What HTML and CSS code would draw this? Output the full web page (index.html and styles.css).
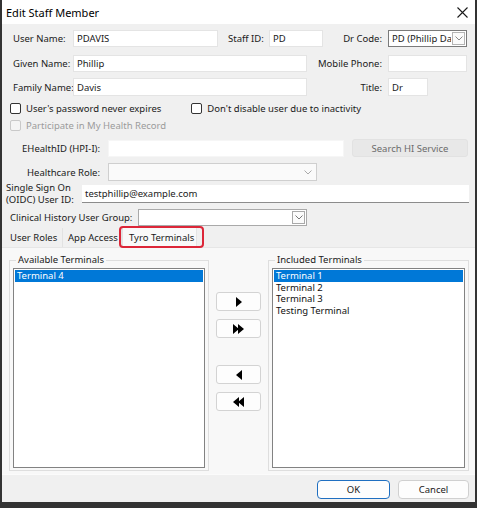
FILE: index.html
```html
<!DOCTYPE html>
<html>
<head>
<meta charset="utf-8">
<link rel="stylesheet" href="styles.css">
</head>
<body>
<div class="window">
  <div class="titlebar">
    <span class="title">Edit Staff Member</span>
    <svg class="close" width="11" height="11" viewBox="0 0 11 11"><path d="M0.5 0.5L10.5 10.5M10.5 0.5L0.5 10.5" stroke="#1a1a1a" stroke-width="1.1"/></svg>
  </div>
  <div class="content">
    <div class="row r1">
      <label class="lbl w60">User Name:</label>
      <div class="input w145">PDAVIS</div>
      <label class="lbl staff">Staff ID:</label>
      <div class="input w54">PD</div>
      <label class="lbl rt w65">Dr Code:</label>
      <div class="select dark w79"><span class="val">PD (Phillip Da</span><span class="drop"><svg width="8" height="5" viewBox="0 0 8 5"><path d="M0.5 0.5L4 4L7.5 0.5" fill="none" stroke="#888" stroke-width="1"/></svg></span></div>
    </div>
    <div class="row r2">
      <label class="lbl w60">Given Name:</label>
      <div class="input w234">Phillip</div>
      <label class="lbl rt w81">Mobile Phone:</label>
      <div class="input w79"></div>
    </div>
    <div class="row r3">
      <label class="lbl w60">Family Name:</label>
      <div class="input w234">Davis</div>
      <label class="lbl rt w81">Title:</label>
      <div class="input w40">Dr</div>
    </div>
    <div class="row r4">
      <span class="check"></span><span class="ctext">User's password never expires</span>
      <span class="check c2"></span><span class="ctext">Don't disable user due to inactivity</span>
    </div>
    <div class="row r5">
      <span class="check disabled"></span><span class="ctext dis">Participate in My Health Record</span>
    </div>
    <div class="row r6">
      <label class="lbl rt w106">EHealthID (HPI-I):</label>
      <div class="input noborder w236"></div>
      <div class="btn-search">Search HI Service</div>
    </div>
    <div class="row r7">
      <label class="lbl rt w106">Healthcare Role:</label>
      <div class="select light w209"><span class="val"></span><span class="chev"><svg width="8" height="5" viewBox="0 0 8 5"><path d="M0.5 0.5L4 4L7.5 0.5" fill="none" stroke="#aaa" stroke-width="1"/></svg></span></div>
    </div>
    <div class="row r8">
      <label class="lbl two w76">Single Sign On<br>(OIDC) User ID:</label>
      <div class="input sso w387">testphillip@example.com</div>
    </div>
    <div class="row r9">
      <label class="lbl w128">Clinical History User Group:</label>
      <div class="select mid w169"><span class="val"></span><span class="drop"><svg width="8" height="5" viewBox="0 0 8 5"><path d="M0.5 0.5L4 4L7.5 0.5" fill="none" stroke="#777" stroke-width="1"/></svg></span></div>
    </div>
    <div class="tabs">
      <div class="tab">User Roles</div>
      <div class="tab">App Access</div>
      <div class="tab active">Tyro Terminals<span class="highlight"></span></div>
    </div>
    <div class="panel">
      <fieldset class="group">
        <legend>Available Terminals</legend>
        <div class="list">
          <div class="item sel">Terminal 4</div>
        </div>
      </fieldset>
      <div class="movers">
        <button class="mv"><svg width="6" height="10" viewBox="0 0 6 10"><path d="M0 0L6 5L0 10Z" fill="#000"/></svg></button>
        <button class="mv"><svg width="11" height="10" viewBox="0 0 11 10"><path d="M0 0L6 5L0 10Z M5 0L11 5L5 10Z" fill="#000"/></svg></button>
        <button class="mv gap"><svg width="6" height="10" viewBox="0 0 6 10"><path d="M6 0L0 5L6 10Z" fill="#000"/></svg></button>
        <button class="mv"><svg width="11" height="10" viewBox="0 0 11 10"><path d="M6 0L0 5L6 10Z M11 0L5 5L11 10Z" fill="#000"/></svg></button>
      </div>
      <fieldset class="group">
        <legend>Included Terminals</legend>
        <div class="list">
          <div class="item sel">Terminal 1</div>
          <div class="item">Terminal 2</div>
          <div class="item">Terminal 3</div>
          <div class="item">Testing Terminal</div>
        </div>
      </fieldset>
    </div>
    <div class="footer">
      <button class="fbtn ok">OK</button>
      <button class="fbtn">Cancel</button>
    </div>
  </div>
</div>
</body>
</html>
```
FILE: styles.css
```css
* { box-sizing: border-box; }
html, body { margin: 0; padding: 0; }
body {
  background: #333333;
  font-family: "Noto Sans", "Open Sans", sans-serif;
  font-size: 9.5px;
  color: #1a1a1a;
  width: 477px;
  height: 508px;
  overflow: hidden;
}
.window {
  width: 473px;
  height: 502px;
  margin-left: 2px;
  background: #f0f0f0;
  display: flex;
  flex-direction: column;
}
.titlebar {
  height: 24px;
  background: #ffffff;
  display: flex;
  align-items: center;
  justify-content: space-between;
  padding: 0 7px 0 4px;
}
.title { font-size: 11px; color: #000; }
.close { display: block; }
.content { flex: 1; display: flex; flex-direction: column; }

.row { display: flex; align-items: center; }
.r1 { margin-top: 6px; height: 17px; padding-left: 11px; }
.r2 { margin-top: 8px; height: 17px; padding-left: 11px; }
.r3 { margin-top: 6px; height: 18px; padding-left: 11px; }
.r4 { margin-top: 6px; height: 13px; padding-left: 8px; }
.r5 { margin-top: 4px; height: 13px; padding-left: 8px; }
.r6 { margin-top: 8px; height: 17px; padding-left: 0; }
.r7 { margin-top: 6px; height: 18px; padding-left: 0; }
.r8 { margin-top: 1px; height: 24px; padding-left: 4px; }
.r9 { margin-top: 3px; height: 17px; padding-left: 8px; }

.lbl { white-space: nowrap; }
.rt { text-align: right; padding-right: 6px; }
.w60 { width: 60px; }
.w65 { width: 65px; }
.w81 { width: 81px; }
.w106 { width: 106px; padding-right: 8px; }
.w76 { width: 76px; }
.w128 { width: 128px; }
.staff { width: 41px; margin-left: 10px; }
.two { line-height: 12px; }

.input {
  height: 17px;
  background: #ffffff;
  border: 1px solid #e4e4e4;
  padding: 0 3px;
  display: flex;
  align-items: center;
  white-space: nowrap;
  overflow: hidden;
}
.r3 .input, .r7 .select { height: 18px; }
.input.noborder { border-color: #f6f6f6; }
.input.sso { height: 18px; border: none; border-bottom: 1px solid #8c8c8c; padding-left: 3px; }
.w145 { width: 145px; }
.w54 { width: 54px; }
.w79 { width: 79px; }
.w234 { width: 234px; }
.w40 { width: 40px; }
.w236 { width: 236px; }
.w209 { width: 209px; }
.w387 { width: 387px; }
.w169 { width: 169px; }

.select {
  height: 17px;
  display: flex;
  align-items: stretch;
  background: #ffffff;
  border: 1px solid #7a7a7a;
}
.select .val { flex: 1; padding: 0 3px; display: flex; align-items: center; white-space: nowrap; overflow: hidden; }
.select .drop {
  width: 13px;
  border-left: 1px solid #a0a0a0;
  display: flex; align-items: center; justify-content: center;
  background: #fbfbfb;
}
.select .chev { width: 16px; display: flex; align-items: center; justify-content: center; }
.select.light { border-color: #cfcfcf; background: #fafafa; }
.select.mid { border-color: #a9a9a9; }
.select.mid .drop { border: 1px solid #a9a9a9; margin: 1px; }
.select.dark .drop { border: 1px solid #b4b4b4; margin: 1px; }

.check {
  width: 11px; height: 11px;
  border: 1px solid #333;
  border-radius: 2px;
  background: #fff;
  margin-right: 5px;
  flex: none;
}
.check.c2 { margin-left: 30px; }
.check.disabled { border-color: #c9c9c9; background: #f4f4f4; }
.ctext { white-space: nowrap; }
.ctext.dis { color: #9b9b9b; }

.btn-search {
  margin-left: 8px;
  width: 116px;
  height: 18px;
  margin-top: -1px;
  background: #e8e8e8;
  border: 1px solid #e2e2e2;
  border-radius: 3px;
  color: #6b6b6b;
  display: flex; align-items: center; justify-content: center;
}

.tabs {
  margin-top: 2px;
  height: 19px;
  display: flex;
  align-items: stretch;
  padding-left: 4px;
}
.tab {
  padding: 0 5px 0 4px;
  display: flex; align-items: center;
  border-right: 1px solid #e2e2e2;
  white-space: nowrap;
  position: relative;
}
.tab:first-child { width: 57px; }
.tab:nth-child(2) { width: 59px; padding-left: 5px; }
.tab.active {
  width: 75px;
  padding-left: 6px;
  background: #f9f9f9;
  border: 1px solid #e4e4e4;
  border-bottom: none;
  margin-top: -2px;
}
.highlight {
  position: absolute;
  left: -4px; right: -8px; top: -1px; bottom: -1px;
  border: 2px solid #dc2638;
  border-radius: 4px;
}

.panel {
  height: 228px;
  background: #f8f8f8;
  border-top: 1px solid #e6e6e6;
  border-bottom: 1px solid #fbfbfb;
  display: grid;
  grid-template-columns: 200px 45px 201px;
  column-gap: 7px;
  padding: 6px 0 0 7px;
  align-items: start;
}
.group {
  margin: 0;
  padding: 0 3px 1px 3px;
  border: 1px solid #dedede;
  height: 217px;
  min-width: 0;
}
.group legend {
  padding: 0 2px;
  margin-left: 3px;
  line-height: 12px;
  color: #1a1a1a;
}
.list {
  margin-top: 2px;
  height: 200px;
  background: #fff;
  border: 1px solid #828282;
  padding: 1px 1px;
}
.item { height: 11.5px; line-height: 11.5px; padding-left: 2px; color: #111; white-space: nowrap; }
.item.sel { background: #0078d7; color: #fff; }

.movers { display: flex; flex-direction: column; padding-top: 38px; }
.mv {
  width: 45px; height: 19px;
  margin: 0 0 8px 0;
  padding: 0;
  background: #fdfdfd;
  border: 1px solid #d3d3d3;
  border-radius: 3px;
  display: flex; align-items: center; justify-content: center;
}
.mv.gap { margin-top: 19px; }

.footer {
  flex: 1;
  display: flex;
  justify-content: flex-end;
  align-items: flex-start;
  padding: 5px 6px 0 0;
  gap: 8px;
}
.fbtn {
  height: 19px;
  width: 71px;
  background: #fdfdfd;
  border: 1px solid #d0d0d0;
  border-radius: 4px;
  font-family: "Noto Sans", "Open Sans", sans-serif;
  font-size: 9.5px;
  color: #1a1a1a;
  padding: 0;
}
.fbtn.ok { width: 73px; border-color: #1f6fc1; }
```
